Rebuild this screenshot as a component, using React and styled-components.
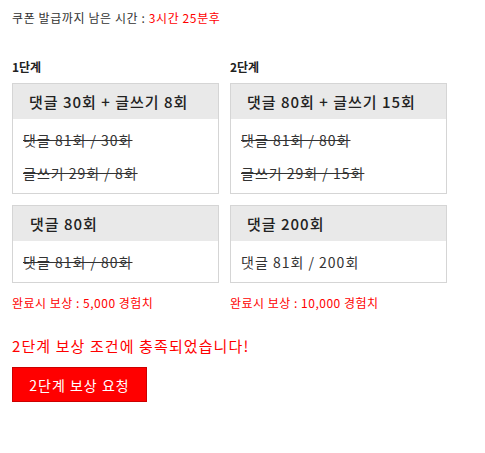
import styled, { createGlobalStyle } from 'styled-components'

const Global = createGlobalStyle`
    body {
        margin : 0;
        background : #fff;
        font-family : "Noto Sans CJK KR", "Noto Sans", sans-serif;
    }
`

const Page = styled.div`
    padding : 9px 12px 20px 12px;
    color : #333;
`

const Countdown = styled.div`
    font-size : 12px;
    line-height : 18px;
    letter-spacing : 0.6px;
    color : #333;
`

const Red = styled.span`
    color : #f00;
`

const Stages = styled.div`
    display : flex;
    gap : 11px;
    margin-top : 31px;
`

const Column = styled.div`
    width : ${p => p.$w}px;
    display : flex;
    flex-direction : column;
`

const Label = styled.div`
    font-size : 12px;
    font-weight : bold;
    line-height : 18px;
    color : #222;
    margin-bottom : 7px;
`

const Card = styled.div`
    border : 1px solid #d5d5d5;
    margin-bottom : 11px;
`

const CardHead = styled.div`
    background : #e9e9e9;
    height : 35px;
    display : flex;
    align-items : center;
    padding-left : ${p => p.$pad || 16}px;
    font-size : 15px;
    font-weight : 500;
    letter-spacing : 1px;
    color : #222;
`

const CardBody = styled.div`
    padding : 4px 10px 4px 10px;
`

const Line = styled.div`
    height : 33px;
    display : flex;
    align-items : center;
    font-size : 14px;
    letter-spacing : 1px;
    color : #333;
    text-decoration : ${p => p.$done ? 'line-through' : 'none'};
`

const Reward = styled.div`
    font-size : 12px;
    color : #f00;
    letter-spacing : 0.5px;
    line-height : 18px;
`

const Notice = styled.div`
    font-size : 15px;
    color : #f00;
    margin-top : 24px;
    letter-spacing : 1.1px;
    line-height : 20px;
`

const RequestButton = styled.button`
    margin-top : 11px;
    width : 135px;
    height : 35px;
    background : #f00;
    border : 1px solid #c00;
    color : #fff;
    font-family : inherit;
    font-size : 14px;
    letter-spacing : 1px;
    padding : 0;
    cursor : pointer;
`

export default function App() {
    return (
        <Page>
            <Global />
            <Countdown>쿠폰 발급까지 남은 시간 : <Red>3시간 25분후</Red></Countdown>

            <Stages>
                <Column $w={207}>
                    <Label>1단계</Label>
                    <Card>
                        <CardHead>댓글 30회 + 글쓰기 8회</CardHead>
                        <CardBody>
                            <Line $done>댓글 81회 / 30회</Line>
                            <Line $done>글쓰기 29회 / 8회</Line>
                        </CardBody>
                    </Card>
                    <Card>
                        <CardHead $pad={17}>댓글 80회</CardHead>
                        <CardBody>
                            <Line $done>댓글 81회 / 80회</Line>
                        </CardBody>
                    </Card>
                    <Reward>완료시 보상 : 5,000 경험치</Reward>
                </Column>

                <Column $w={217}>
                    <Label>2단계</Label>
                    <Card>
                        <CardHead>댓글 80회 + 글쓰기 15회</CardHead>
                        <CardBody>
                            <Line $done>댓글 81회 / 80회</Line>
                            <Line $done>글쓰기 29회 / 15회</Line>
                        </CardBody>
                    </Card>
                    <Card>
                        <CardHead>댓글 200회</CardHead>
                        <CardBody>
                            <Line>댓글 81회 / 200회</Line>
                        </CardBody>
                    </Card>
                    <Reward>완료시 보상 : 10,000 경험치</Reward>
                </Column>
            </Stages>

            <Notice>2단계 보상 조건에 충족되었습니다!</Notice>
            <RequestButton>2단계 보상 요청</RequestButton>
        </Page>
    )
}
